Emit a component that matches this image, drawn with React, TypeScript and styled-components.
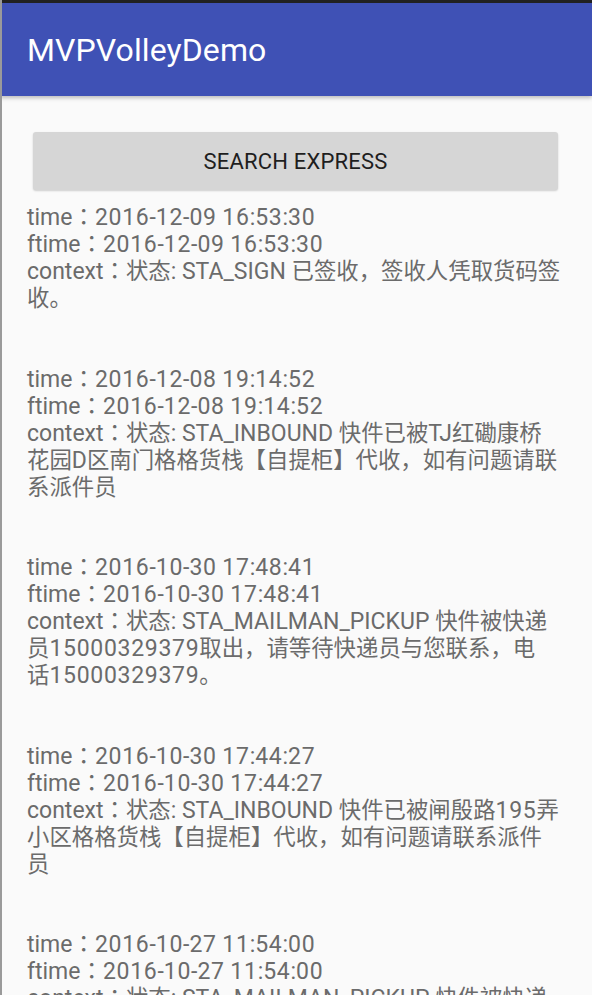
import React from "react";
import styled, { createGlobalStyle } from "styled-components";

const Global = createGlobalStyle`
  html, body { margin: 0; padding: 0; background: #fafafa; }
  body { font-family: Roboto, "Noto Sans CJK SC", sans-serif; overflow: hidden; }
`;

const Screen = styled.div`
  width: 592px;
  height: 995px;
  overflow: hidden;
  background: #fafafa;
  border-left: 2px solid #9a9a9a;
  box-sizing: border-box;
  display: flex;
  flex-direction: column;
`;

const TopEdge = styled.div`
  height: 3px;
  flex-shrink: 0;
  background: #222;
  margin-left: -2px;
`;

const AppBar = styled.header`
  height: 93px;
  flex-shrink: 0;
  background: #3f51b5;
  margin-left: -2px;
  padding-left: 27px;
  display: flex;
  align-items: center;
  box-shadow: 0 2px 4px rgba(0, 0, 0, 0.25);
  position: relative;
  z-index: 1;
`;

const Title = styled.h1`
  margin: 0;
  color: #fff;
  font-family: Roboto, sans-serif;
  font-weight: 400;
  font-size: 32px;
  letter-spacing: 0.1px;
`;

const Content = styled.main`
  flex-shrink: 0;
  padding: 36px 29px 0 25px;
  display: flex;
  flex-direction: column;
`;

const SearchButton = styled.button`
  margin: 0 5px 12px 6px;
  height: 58px;
  flex-shrink: 0;
  border: none;
  border-radius: 3px;
  background: #d6d6d6;
  box-shadow: 0 1px 2px rgba(0, 0, 0, 0.18);
  font-family: Roboto, sans-serif;
  font-size: 22px;
  color: #1e1e1e;
  letter-spacing: 0.2px;
  padding: 0;
`;

const Entry = styled.div`
  font-family: "Noto Sans CJK SC", sans-serif;
  font-size: 22.4px;
  line-height: 26.85px;
  color: #6b6b6b;
  margin-bottom: 53.7px;
  line-break: strict;
`;

const Line = styled.div``;

const Latin = styled.span`
  font-family: Roboto, sans-serif;
  font-size: 23px;
  line-height: 1;
`;

const Num = styled.span`
  letter-spacing: 0.7px;
`;

const Punct = styled.span`
  font-family: "Noto Sans CJK JP", sans-serif;
  line-height: 1;
`;

const Keep = styled.span`
  white-space: nowrap;
`;

const CJK_RUN = /([\u3000-\u9fff\uff00-\uffef]+)/;
const CJK_ONLY = /^[\u3000-\u9fff\uff00-\uffef]+$/;

function LatinText({ s }: { s: string }) {
  const parts = s.split(/(\d+)/);
  return (
    <Latin>
      {parts.map((p, i) =>
        /^\d+$/.test(p) ? <Num key={i}>{p}</Num> : <React.Fragment key={i}>{p}</React.Fragment>
      )}
    </Latin>
  );
}

function CjkText({ s }: { s: string }) {
  const sub = s.split(/([：，。])/);
  return (
    <>
      {sub.map((q, j) =>
        /^[：，。]$/.test(q) ? <Punct key={j}>{q}</Punct> : <React.Fragment key={j}>{q}</React.Fragment>
      )}
    </>
  );
}

function Mixed({ s }: { s: string }) {
  const parts = s.split(CJK_RUN);
  return (
    <>
      {parts.map((p, i) => {
        if (!p) return null;
        return CJK_ONLY.test(p) ? <CjkText key={i} s={p} /> : <LatinText key={i} s={p} />;
      })}
    </>
  );
}

function Txt({ s }: { s: string }) {
  const parts = s.split(/([\u4e00-\u9fff]\d+)/);
  return (
    <>
      {parts.map((p, i) =>
        /^[\u4e00-\u9fff]\d+$/.test(p) ? (
          <Keep key={i}>
            <Mixed s={p} />
          </Keep>
        ) : (
          <Mixed key={i} s={p} />
        )
      )}
    </>
  );
}

const data = [
  {
    time: "2016-12-09 16:53:30",
    context: "状态: STA_SIGN 已签收，签收人凭取货码签收。",
  },
  {
    time: "2016-12-08 19:14:52",
    context:
      "状态: STA_INBOUND 快件已被TJ红磡康桥花园D区南门格格货栈【自提柜】代收，如有问题请联系派件员",
  },
  {
    time: "2016-10-30 17:48:41",
    context:
      "状态: STA_MAILMAN_PICKUP 快件被快递员15000329379取出，请等待快递员与您联系，电话15000329379。",
  },
  {
    time: "2016-10-30 17:44:27",
    context:
      "状态: STA_INBOUND 快件已被闸殷路195弄小区格格货栈【自提柜】代收，如有问题请联系派件员",
  },
  {
    time: "2016-10-27 11:54:00",
    context: "状态: STA_MAILMAN_PICKUP 快件被快递员取出",
  },
];

export default function App() {
  return (
    <>
      <Global />
      <Screen>
        <TopEdge />
        <AppBar>
          <Title>MVPVolleyDemo</Title>
        </AppBar>
        <Content>
          <SearchButton>SEARCH EXPRESS</SearchButton>
          {data.map((d, i) => (
            <Entry key={i}>
              <Line><Txt s={`time：${d.time}`} /></Line>
              <Line><Txt s={`ftime：${d.time}`} /></Line>
              <Line><Txt s={`context：${d.context}`} /></Line>
            </Entry>
          ))}
        </Content>
      </Screen>
    </>
  );
}
